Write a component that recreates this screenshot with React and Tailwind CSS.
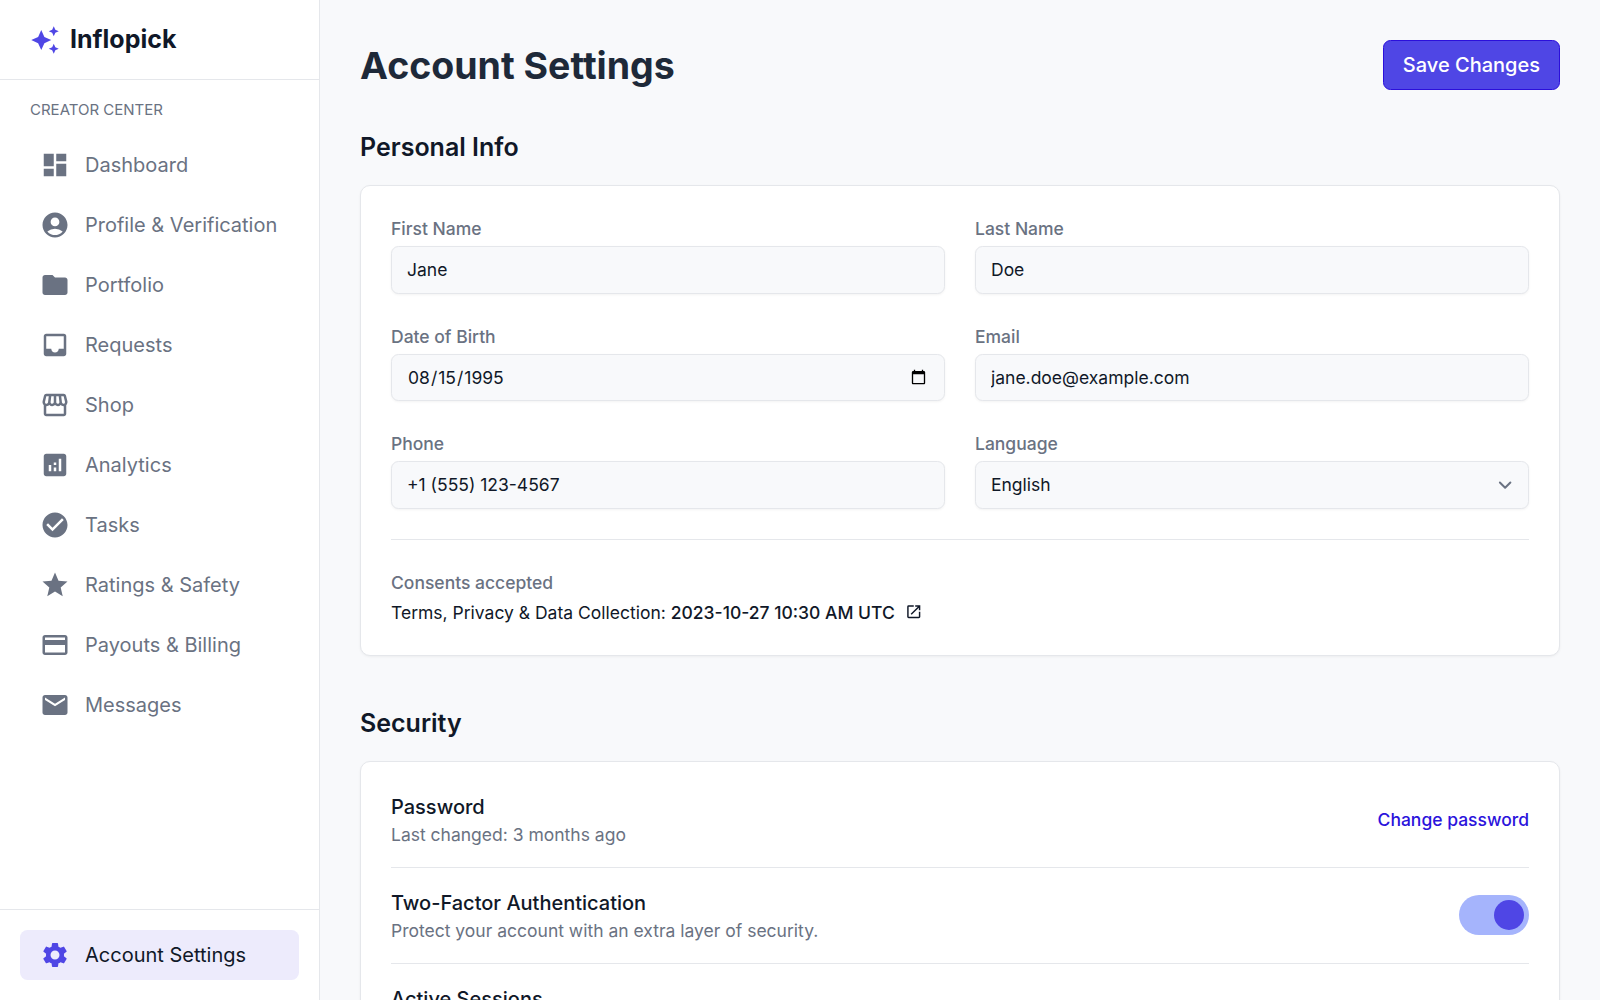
import React from "react";
import {
  MdAccountCircle,
  MdAnalytics,
  MdAutoAwesome,
  MdCheckCircle,
  MdCreditCard,
  MdDashboard,
  MdFolder,
  MdInbox,
  MdMail,
  MdOpenInNew,
  MdOutlineStorefront,
  MdSettings,
  MdStar,
} from "react-icons/md";

const NAV = [
  [MdDashboard, "Dashboard"],
  [MdAccountCircle, "Profile & Verification"],
  [MdFolder, "Portfolio"],
  [MdInbox, "Requests"],
  [MdOutlineStorefront, "Shop"],
  [MdAnalytics, "Analytics"],
  [MdCheckCircle, "Tasks"],
  [MdStar, "Ratings & Safety"],
  [MdCreditCard, "Payouts & Billing"],
  [MdMail, "Messages"],
];

const FIELD =
  "block h-[47.5px] w-full appearance-none rounded-[7.5px] border border-gray-200 bg-[#f8f9fb] px-[15px] text-[17.5px] leading-[25px] text-gray-900 shadow-[0_1px_2.5px_rgba(0,0,0,0.05)] outline-none";

function Field({ label, children }) {
  return (
    <label className="flex flex-col gap-[5px]">
      <span className="text-[17.5px] leading-[25px] font-medium text-gray-500">{label}</span>
      {children}
    </label>
  );
}

function Sidebar() {
  return (
    <aside className="flex w-80 shrink-0 flex-col border-r border-gray-200 bg-white">
      <div className="flex h-20 shrink-0 items-center gap-2.5 border-b border-gray-200 px-[30px]">
        <MdAutoAwesome className="size-[30px] text-[#4f46e5]" />
        <span className="text-[25px] leading-[35px] font-bold text-gray-900">Inflopick</span>
      </div>
      <nav className="flex flex-1 flex-col p-5">
        <p className="px-2.5 text-[15px] leading-5 text-gray-500 uppercase">Creator Center</p>
        <ul className="mt-5 flex flex-col gap-2.5">
          {NAV.map(([Icon, label]) => (
            <li key={label} className="flex h-[50px] items-center gap-[15px] px-5 text-xl leading-[30px] text-gray-500">
              <Icon className="size-[30px] shrink-0" />
              <span className="whitespace-nowrap">{label}</span>
            </li>
          ))}
        </ul>
      </nav>
      <div className="border-t border-gray-200 p-5">
        <div className="flex h-[50px] items-center gap-[15px] rounded-[7.5px] bg-[#edebfc] px-5 text-xl leading-[30px] text-gray-900">
          <MdSettings className="size-[30px] shrink-0 text-[#4f46e5]" />
          <span>Account Settings</span>
        </div>
      </div>
    </aside>
  );
}

function PersonalInfo() {
  return (
    <section>
      <h2 className="text-[25px] leading-[35px] font-semibold text-gray-900">Personal Info</h2>
      <div className="mt-5 rounded-[10px] border border-gray-200 bg-white p-[30px] shadow-[0_1px_2.5px_rgba(0,0,0,0.05)]">
        <div className="grid grid-cols-2 gap-[30px]">
          <Field label="First Name">
            <input className={FIELD} defaultValue="Jane" />
          </Field>
          <Field label="Last Name">
            <input className={FIELD} defaultValue="Doe" />
          </Field>
          <Field label="Date of Birth">
            <input type="date" className={FIELD} defaultValue="1995-08-15" />
          </Field>
          <Field label="Email">
            <input className={FIELD} defaultValue="jane.doe@example.com" />
          </Field>
          <Field label="Phone">
            <input className={FIELD} defaultValue="+1 (555) 123-4567" />
          </Field>
          <Field label="Language">
            <div className="relative">
              <select className={FIELD} defaultValue="English">
                <option>English</option>
              </select>
              <svg viewBox="0 0 20 20" fill="none" className="pointer-events-none absolute top-[11px] right-[11px] size-[26.25px] stroke-gray-500">
                <path d="M6 8l4 4 4-4" strokeWidth="1.5" strokeLinecap="round" strokeLinejoin="round" />
              </svg>
            </div>
          </Field>
        </div>
        <div className="mt-[30px] border-t border-gray-200 pt-[30px] text-[17.5px] leading-[25px]">
          <p className="font-medium text-gray-500">Consents accepted</p>
          <div className="mt-[5px] flex items-center gap-2.5 text-gray-900">
            <p>
              Terms, Privacy &amp; Data Collection: <span className="font-medium">2023-10-27 10:30 AM UTC</span>
            </p>
            <MdOpenInNew className="size-[17.5px]" />
          </div>
        </div>
      </div>
    </section>
  );
}

function SecurityRow({ title, detail, children }) {
  return (
    <div className="flex items-center justify-between">
      <div>
        <p className="text-xl leading-[30px] font-medium text-gray-900">{title}</p>
        <p className="text-[17.5px] leading-[25px] text-gray-500">{detail}</p>
      </div>
      {children}
    </div>
  );
}

function Security() {
  return (
    <section className="mt-[50px]">
      <h2 className="text-[25px] leading-[35px] font-semibold text-gray-900">Security</h2>
      <div className="mt-5 flex flex-col gap-5 rounded-[10px] border border-gray-200 bg-white p-[30px] shadow-[0_1px_2.5px_rgba(0,0,0,0.05)]">
        <SecurityRow title="Password" detail="Last changed: 3 months ago">
          <button className="text-[17.5px] leading-[25px] font-medium text-[#2b13dc]">Change password</button>
        </SecurityRow>
        <hr className="border-gray-200" />
        <SecurityRow title="Two-Factor Authentication" detail="Protect your account with an extra layer of security.">
          <button role="switch" aria-checked="true" className="flex h-10 w-[70px] items-center justify-end rounded-full bg-[#a5b4fc] p-[5px]">
            <span className="size-[30px] rounded-full bg-[#4f46e5]" />
          </button>
        </SecurityRow>
        <hr className="border-gray-200" />
        <SecurityRow title="Active Sessions" detail="Devices currently signed in to your account." />
      </div>
    </section>
  );
}

export default function App() {
  return (
    <div className="flex h-screen overflow-hidden bg-[#f8f9fb] font-['Inter',sans-serif]">
      <Sidebar />
      <main className="min-w-0 flex-1 overflow-hidden p-10">
        <header className="mb-10 flex h-[50px] items-center justify-between">
          <h1 className="text-[37.5px] leading-[45px] font-bold text-gray-800">Account Settings</h1>
          <button className="h-[50px] rounded-[7.5px] border border-[#2b0fdb] bg-[#4f46e5] px-[19px] text-xl leading-[30px] font-medium text-white">
            Save Changes
          </button>
        </header>
        <PersonalInfo />
        <Security />
      </main>
    </div>
  );
}
